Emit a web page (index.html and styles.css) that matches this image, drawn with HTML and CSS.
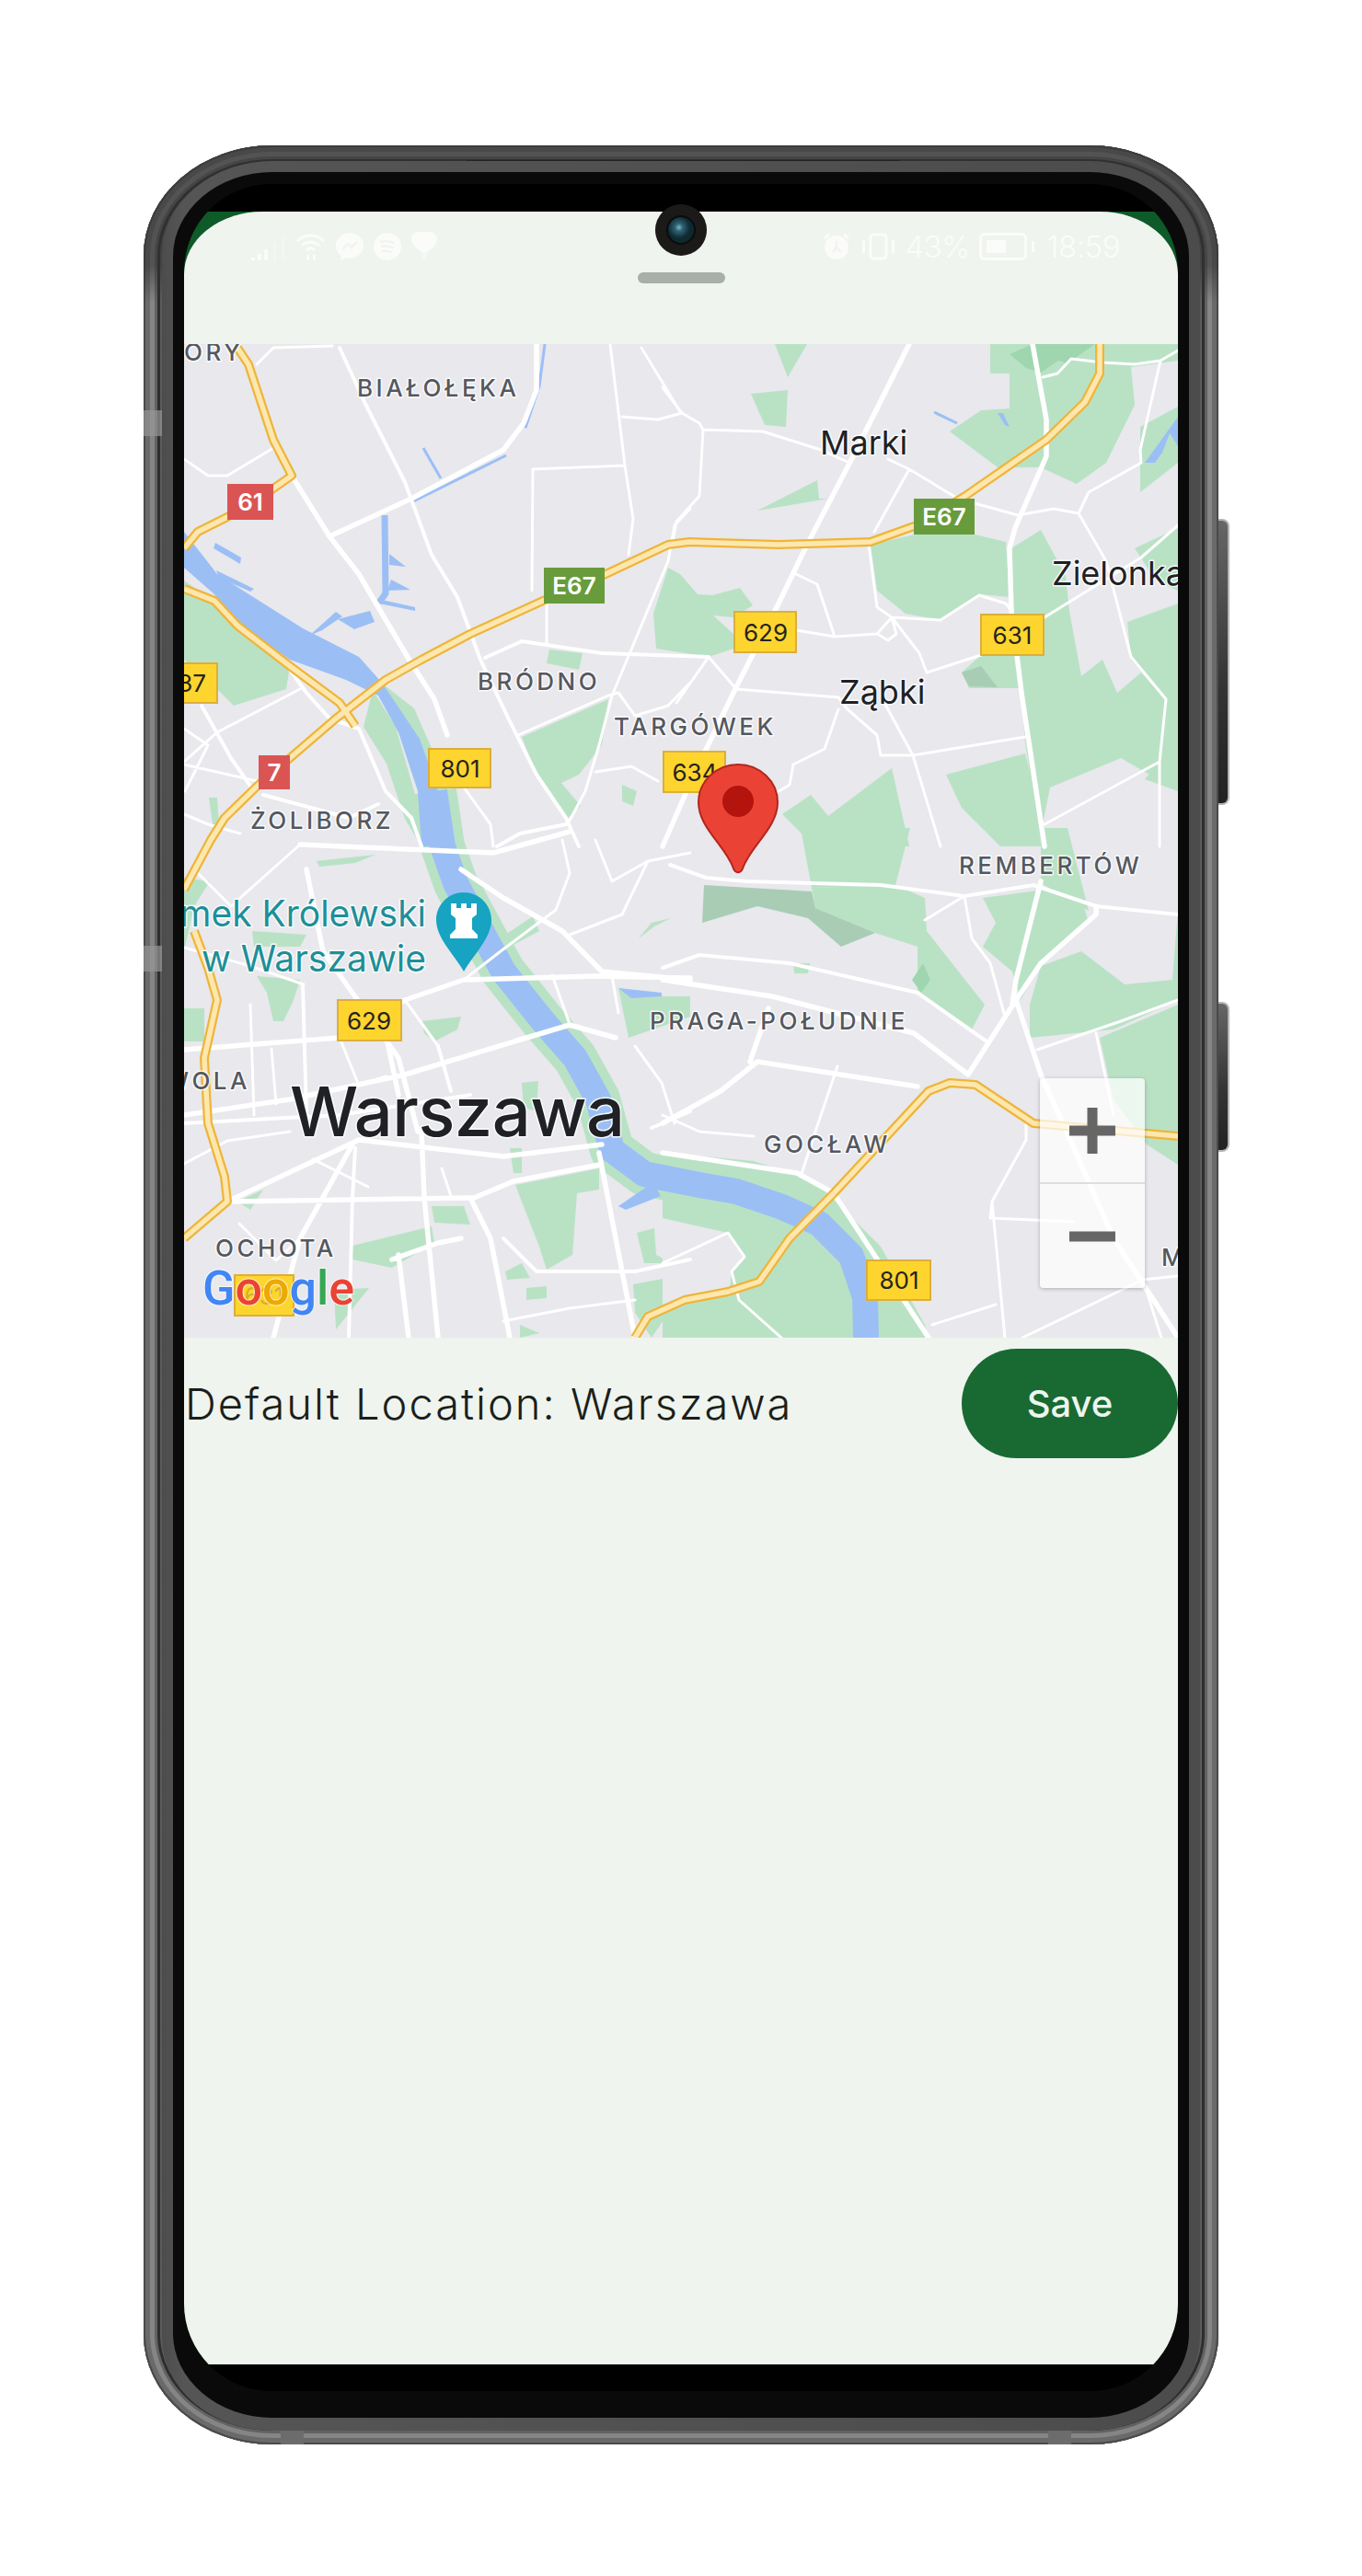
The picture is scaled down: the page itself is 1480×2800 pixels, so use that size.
FILE: index.html
```html
<!DOCTYPE html>
<html lang="en">
  <head>
    <meta charset="UTF-8" />
    <meta name="viewport" content="width=device-width, initial-scale=1.0" />
    <title>Default Location</title>
    <link rel="stylesheet" href="styles.css">
  </head>
  <body>
    <div class="phone">
      <span class="side-key side-key-top"></span>
      <span class="side-key side-key-low"></span>
      <span class="band band-left-top"></span>
      <span class="band band-left-low"></span>
      <span class="band band-bottom-left"></span>
      <span class="band band-bottom-right"></span>
      <span class="top-slit"></span>

      <div class="mid-frame">
        <div class="bezel">
          <div class="screen">
            <div class="app-back">
              <div class="app">
                <div class="camera"><span class="lens"></span></div>

                <div class="status-bar">
                  <div class="status-group status-left">
                    <svg class="icon" width="37" height="32" viewBox="0 0 37 32">
                      <rect x="0" y="28" width="4" height="3" />
                      <rect x="7" y="24" width="4" height="7" />
                      <rect x="14" y="19" width="4" height="12" />
                      <rect x="24" y="12" width="3" height="19" opacity=".4" />
                      <rect x="33" y="4" width="3" height="27" opacity=".4" />
                    </svg>
                    <svg class="icon" width="33" height="32" viewBox="0 0 33 32">
                      <path class="icon-line" d="M2 10C10 2 23 2 31 10M7 15C12 10 21 10 26 15M12 20C15 17 18 17 21 20" />
                      <rect x="12" y="25" width="3" height="6" />
                      <rect x="19" y="25" width="3" height="6" />
                    </svg>
                    <svg class="icon" width="30" height="30" viewBox="0 0 30 30">
                      <path d="M15 0C6.700 0 0 6.200 0 14c0 4.400 2.100 8.200 5.500 10.800V30l5-2.800c1.400.4 2.900.6 4.500.6 8.300 0 15-6.200 15-13.800S23.300 0 15 0z" />
                      <path class="icon-cut" d="M7 18l6-6 4 4 6-6" />
                    </svg>
                    <svg class="icon" width="30" height="30" viewBox="0 0 30 30">
                      <circle cx="15" cy="15" r="15" />
                      <path class="icon-cut" d="M7 10c6-1.500 11-1 16 1.500M8 15c5-1 9-.7 13.500 1.500M9 20c4-.8 7-.5 11 1.200" />
                    </svg>
                    <svg class="icon" width="28" height="32" viewBox="0 0 28 32">
                      <path d="M14 24C6 19 0 14 0 8 0 3 4 0 8 0h12c4 0 8 3 8 8 0 6-6 11-14 16z" />
                      <rect x="12" y="24" width="4" height="7" opacity=".5" />
                    </svg>
                  </div>
                  <div class="status-group status-right">
                    <svg class="icon icon-alarm" width="30" height="30" viewBox="0 0 30 30">
                      <circle cx="15" cy="16" r="13" />
                      <path class="icon-line" d="M2 6l5-4M28 6l-5-4" />
                      <path class="icon-cut" d="M15 9v7l-4 5M15 16l5 5" />
                    </svg>
                    <svg class="icon" width="37" height="30" viewBox="0 0 37 30">
                      <rect class="icon-line" x="10" y="2" width="17" height="26" rx="3" />
                      <rect x="1" y="8" width="3" height="14" />
                      <rect x="33" y="8" width="3" height="14" />
                    </svg>
                    <span class="status-text status-percent">43%</span>
                    <span class="battery"><span class="battery-fill"></span></span>
                    <span class="status-text status-time">18:59</span>
                  </div>
                </div>

                <div class="handle"></div>

                <div class="map">
                  <svg class="map-art" viewBox="200 374 1080 1080" width="1080" height="1080">
                    <defs>
                      <g id="highways">
                        <path d="M258 378L270 396 297 478 317 517 297 531 247 562 215 578 200 596" />
                        <path d="M200 640L233 653 258 680 315 724 369 764 386 789" />
                        <path d="M200 967L229 913 244 889 281 853 315 824 365 781 419 739 458 717 511 689 590 653 654 626 726 592 749 589 846 592 946 589 996 571 1049 539 1137 478 1179 437 1195 406 1195 374" />
                        <path d="M211 1012L226 1052 236 1087 222 1150 226 1221 244 1279 247 1306 200 1346" />
                        <path d="M690 1454L704 1431 744 1413 791 1404 825 1393 858 1346 906 1297 1009 1186 1032 1177 1060 1179 1123 1221 1280 1235" />
                      </g>
                      <path id="river" d="M472 860L481 920 495 960 522 1010 547 1056 590 1110 625 1150 650 1195 665 1250 700 1276 760 1288 800 1295 850 1312 890 1330 925 1365 940 1410 941 1454" />
                    </defs>

                    <rect class="land" x="200" y="374" width="1080" height="1080" />

                    <g class="park">
                      <polygon points="200,631 226,649 254,681 315,724 311,749 254,767 236,749 200,717" />
                      <polygon points="567,801 661,760 654,810 629,842 610,851 631,876 617,889 583,842" />
                      <polygon points="597,706 633,710 629,728 594,721" />
                      <polygon points="676,853 692,860 688,876 676,871" />
                      <polygon points="726,617 739,624 758,646 774,647 804,639 818,658 797,671 775,669 797,689 797,705 770,714 713,705 710,667" />
                      <polygon points="842,374 877,374 856,410" />
                      <polygon points="816,428 856,424 854,464 831,462" />
                      <polygon points="823,555 888,522 890,542 900,542" />
                      <polygon points="1076,374 1280,374 1280,392 1229,399 1233,440 1202,503 1170,526 1135,510 1133,508 1084,508 1032,469 1066,446 1097,444 1097,406 1076,406" />
                      <polygon points="1239,464 1280,442 1280,503 1239,535" />
                      <polygon points="946,592 994,581 1059,581 1093,589 1097,649 1064,646 1022,674 984,667 953,642" />
                      <polygon points="1099,596 1131,576 1158,626 1162,664 1175,735 1198,717 1214,753 1240,731 1267,760 1260,824 1280,860 1218,824 1141,856 1133,896 1149,920 1130,920 1114,806 1099,646" />
                      <polygon points="1225,676 1280,656 1280,860 1244,847 1260,828 1267,760 1229,717" />
                      <polygon points="1233,596 1280,574 1280,642 1256,631" />
                      <polygon points="1045,731 1066,712 1106,712 1110,748 1053,748" />
                      <polygon points="850,885 881,864 900,887 969,835 988,920 885,920" />
                      <polygon points="1028,842 1114,819 1133,896 1141,920 1087,920 1045,878" />
                      <polygon points="870,900 989,900 973,962 882,965" />
                      <polygon points="882,965 973,962 1005,976 1007,1012 1070,1092 1056,1119 997,1079 997,1029 951,1014 886,987" />
                      <polygon points="862,1047 880,1047 878,1058 863,1058" />
                      <polygon points="1068,1029 1082,1003 1068,976 1171,962 1183,1003 1131,1047 1109,1087 1100,1056" />
                      <polygon points="1131,1050 1175,1034 1222,1070 1274,1065 1280,989 1280,1087 1210,1119 1119,1128 1119,1092" />
                      <polygon points="1195,1128 1280,1092 1280,1266 1246,1244 1210,1195" />
                      <polygon points="1131,900 1160,900 1183,990 1131,960" />
                      <polygon points="720,1253 819,1262 886,1284 957,1355 1005,1440 1009,1454 720,1454" />
                      <polygon points="200,954 228,958 211,985 200,1034" />
                      <polygon points="200,1096 222,1096 222,1132 200,1132" />
                      <polygon points="274,1012 333,1016 326,1029 276,1029" />
                      <polygon points="279,1061 326,1065 319,1087 308,1110 297,1110 290,1079" />
                      <polygon points="344,936 408,929 386,938 347,942" />
                      <polygon points="227,867 236,867 238,896 231,896" />
                      <polygon points="694,1020 708,1003 729,998 711,1007" />
                      <polygon points="672,1074 722,1083 750,1083 750,1105 683,1128" />
                      <polygon points="549,1016 579,996 586,1012 554,1029" />
                      <polygon points="458,1110 501,1105 497,1119 472,1132 461,1123" />
                      <polygon points="560,1288 651,1270 651,1293 627,1297 622,1364 594,1380 586,1355" />
                      <polygon points="549,1382 567,1373 576,1389 551,1391" />
                      <polygon points="572,1400 594,1398 594,1411 572,1413" />
                      <polygon points="692,1340 711,1335 713,1364 730,1373 700,1373" />
                      <polygon points="688,1396 736,1387 736,1413 708,1454 690,1427" />
                      <polygon points="379,1355 469,1333 472,1351 426,1378 383,1369" />
                      <polygon points="469,1311 504,1311 511,1331 472,1329" />
                      <polygon points="258,1306 286,1293 272,1315" />
                      <polygon points="363,1402 401,1400 365,1445" />
                      <polygon points="565,1440 586,1449 565,1454" />
                      <polygon points="554,1248 567,1248 567,1275 558,1275" />
                      <polygon points="567,1177 585,1175 583,1208 569,1204" />
                      <polygon points="405,735 450,770 485,850 500,920 498,960 470,900 450,830 420,770" />
                      <polygon points="405,750 430,790 450,860 458,920 440,890 420,830 395,790" />
                    </g>
                    <g class="park-dark">
                      <polygon points="1097,385 1122,374 1190,374 1160,395 1150,392 1131,405 1115,400" />
                      <polygon points="991,1065 1003,1047 1011,1065 1001,1079" />
                    </g>
                    <g class="park-grey">
                      <polygon points="765,962 882,969 886,987 951,1014 914,1029 878,998 823,985 763,1003" />
                      <polygon points="1045,731 1066,724 1084,747 1053,746" />
                    </g>
                    <g class="land">
                      <polygon points="720,1324 791,1340 809,1366 795,1382 793,1400 720,1418" />
                    </g>

                    <use href="#river" class="river-bank" />
                    <use href="#river" class="river-water" />
                    <g class="water">
                      <polygon points="200,578 236,624 329,683 390,714 415,742 456,803 476,860 486,920 458,920 454,860 433,796 411,756 376,739 315,717 258,678 233,646 200,617" />
                      <polygon points="672,1311 710,1285 718,1300 680,1315" />
                      <polygon points="672,1074 719,1079 719,1083 686,1085" />
                      <polygon points="1084,449 1090,449 1097,464 1092,462" />
                      <polygon points="1244,503 1280,453 1280,485 1271,471 1263,492 1255,503" />
                      <polygon points="234,590 262,606 261,613 232,596" />
                      <polygon points="235,620 276,640 272,643 238,628" />
                      <polygon points="423,602 441,616 423,614" />
                      <polygon points="425,630 446,641 421,642" />
                      <polygon points="415,652 451,660 451,664 412,656" />
                      <polygon points="367,673 402,664 407,676 385,684" />
                      <polygon points="336,691 365,665 372,670 350,685" />
                    </g>
                    <path class="canal canal-wide" d="M418 560L419 645 412 655" />
                    <path class="canal canal-thin" d="M447 546L550 495M460 487L479 520M592 374L586 420 571 465M1015 448L1040 460" />

                    <path class="road road-sm" d="M579 510L679 506 688 564 683 603M579 510L578 642M663 374L679 506M594 656L594 699M563 799L661 756 672 753 690 778 726 767 750 742M750 553L733 571 726 610 686 706 665 756 651 810 636 860 619 892M676 453L715 456 741 449M697 378L740 449M279 396L297 378 361 376M200 499L226 517 247 517 297 487M326 749L236 796 200 828M200 792L226 810 201 860M200 831L279 849M200 885L226 896 261 906M504 856L533 896 536 920M647 839L686 833 715 849M720 421L741 449 760 460 764 467 829 469 892 489 923 503M764 467L760 539 735 567 731 589M965 499L988 510 1041 542 1106 560 1145 553 1172 558 1183 535 1240 503M988 510L950 578M1133 410L1149 406 1164 390 1198 394 1233 396 1261 392 1280 381M1261 392L1239 489 1240 503M1172 558L1202 610 1229 714 1267 760 1260 828 1260 920M1135 671L1240 606 1280 571M1135 896L1260 828M944 592L953 660 969 671 1022 674 1064 647 1093 656 1099 664M969 671L953 689 965 696 974 689 969 671M865 685L907 692 953 689M969 671L999 710 1007 731 1066 712M865 624L888 635 907 692M770 714L800 749 911 758 921 771 953 799 957 821 992 821 1114 801M770 714L735 764M961 764L992 821 1022 920M911 771L896 814 862 831 858 853 835 867M1048 974L1056 1020 1076 1047 1092 1105M1127 1141L1218 1110 1280 1087M1191 1123L1210 1212M910 1159L886 1230 870 1279M720 1212L760 1230 819 1235M1115 1221L1115 1239 1078 1306 1076 1324 1167 1328M1078 1306L1092 1454M1013 1440L1082 1418M1111 1454L1242 1391 1280 1387M1242 1391L1262 1454M720 1373L791 1340 809 1366 795 1382 803 1413 849 1454M211 945L251 985 326 918M611 913L619 949 604 989 544 1034 504 1065M647 913L665 958 704 936 750 927M704 936L676 994 619 1016M272 1092L276 1212M547 1436L619 1422 690 1413M665 1061L672 1101M690 1137L719 1177 733 1221M200 1030L272 1050 330 1070M440 1087L476 1137M369 1128L390 1180 419 1170M560 1130L619 1114M600 1060L620 1116M480 1270L490 1300M295 1140L300 1200M200 1265L247 1240 315 1230M260 1330L300 1370 326 1346M340 1260L400 1290M1005 1000L1048 974" />
                    <path class="road road-md" d="M369 378L397 439 440 524 469 603 497 649 522 717 551 778 583 842 615 889 629 920M527 715L567 697 654 710 770 714M315 728L333 753 358 781 390 792 419 860 447 889 458 920M219 767L251 824 276 860M286 864L379 889 411 874M615 896L565 906 540 920M728 940L767 954 811 958 957 962 1048 974 1123 962 1191 985 1280 994M720 1052L760 1038 858 1047 997 1079 1072 1132M200 1221L369 1212 511 1190M547 1346L583 1382 690 1382 750 1369M386 1248L383 1302 379 1454M329 1070L333 1212M476 1137L490 1186M708 1226L750 1208" />
                    <path class="road road-lg" d="M320 522L358 583 390 624 411 660 447 721 472 760 486 799M358 583L447 542 547 489 569 460 583 424 583 374M988 374L927 496 877 592 846 656 797 753 754 842 720 920M1122 374L1137 456 1137 496 1103 574 1097 596 1099 664 1110 753 1135 920M1131 958L1104 1065 1100 1092M1191 985L1191 994 1131 1047 1104 1087 1052 1168M1104 1087L1131 1168 1167 1248 1210 1346 1280 1454M720 1065L839 1083 993 1123 1052 1168M720 1221L783 1186 823 1154 997 1181M815 1154L835 1096M720 1253L866 1275 906 1297 1009 1454M200 1212L315 1195 440 1168 619 1114 669 1128M247 1306L390 1239 547 1257 654 1244M383 1244L326 1346 297 1454M458 1230L461 1302 476 1454M511 1302L533 1346 554 1454M333 945L351 1034 433 1150 454 1230M326 918L536 927 619 904M501 945L547 976 611 1012 654 1056 750 1065M419 1123L433 1190M651 1253L690 1454M247 1306L515 1302 558 1284 651 1266M426 1369L476 1351 501 1346M433 1364L444 1454M200 1141L369 1128 440 1087 504 1065 647 1061 750 1063" />

                    <use href="#highways" class="hw-case" />
                    <use href="#highways" class="hw-core" />

                    <text class="label-area" x="200" y="392">ORY</text>
                    <text class="label-area" x="388" y="431">BIAŁOŁĘKA</text>
                    <text class="label-area" x="519" y="750">BRÓDNO</text>
                    <text class="label-area" x="667" y="799">TARGÓWEK</text>
                    <text class="label-area" x="272" y="901">ŻOLIBORZ</text>
                    <text class="label-area" x="1042" y="950">REMBERTÓW</text>
                    <text class="label-area" x="706" y="1119">PRAGA-POŁUDNIE</text>
                    <text class="label-area" x="830" y="1253">GOCŁAW</text>
                    <text class="label-area" x="272" y="1184" text-anchor="end">WOLA</text>
                    <text class="label-area" x="234" y="1366">OCHOTA</text>
                    <text class="label-area" x="1262" y="1376">M</text>
                    <text class="label-town" x="891" y="494">Marki</text>
                    <text class="label-town" x="912" y="765">Ząbki</text>
                    <text class="label-town" x="1143" y="636">Zielonka</text>
                    <text class="label-city" x="315" y="1235">Warszawa</text>
                    <text class="label-poi" x="463" y="1007" text-anchor="end">Zamek Królewski</text>
                    <text class="label-poi" x="463" y="1056" text-anchor="end">w Warszawie</text>

                    <path class="poi-pin" d="M504 970c-16.600 0-30 13.400-30 30 0 20 20 38 30 56 10-18 30-36 30-56 0-16.600-13.400-30-30-30z" />
                    <path class="poi-tower" d="M490 982h6v5h5v-5h6v5h5v-5h6v12l-5 4v12l6 6v4h-30v-4l6-6v-12l-5-4z" />

                    <g class="shield shield-red">
                      <rect x="247" y="526" width="50" height="39" /><text x="272" y="555">61</text>
                      <rect x="281" y="821" width="34" height="37" /><text x="298" y="849">7</text>
                    </g>
                    <g class="shield shield-green">
                      <rect x="591" y="617" width="66" height="39" /><text x="624" y="646">E67</text>
                      <rect x="993" y="542" width="66" height="39" /><text x="1026" y="571">E67</text>
                    </g>
                    <g class="shield shield-yellow">
                      <rect x="180" y="721" width="56" height="43" /><text x="224" y="752" class="shield-end">637</text>
                      <rect x="466" y="814" width="67" height="42" /><text x="500" y="845">801</text>
                      <rect x="798" y="665" width="67" height="44" /><text x="832" y="697">629</text>
                      <rect x="1066" y="668" width="68" height="44" /><text x="1100" y="700">631</text>
                      <rect x="721" y="817" width="67" height="44" /><text x="755" y="849">634</text>
                      <rect x="367" y="1087" width="69" height="44" /><text x="401" y="1119">629</text>
                      <rect x="942" y="1370" width="69" height="43" /><text x="977" y="1401">801</text>
                      <rect x="255" y="1386" width="64" height="44" /><text x="287" y="1418" class="shield-faint">631</text>
                    </g>

                    <text class="google" x="220" y="1418"><tspan class="g-blue">G</tspan><tspan class="g-red">o</tspan><tspan class="g-yellow">o</tspan><tspan class="g-blue">g</tspan><tspan class="g-green">l</tspan><tspan class="g-red">e</tspan></text>

                    <path class="pin-body" d="M802 831c-23.700 0-43 18.500-43 41 0 28 30 48 38 72 1.700 5.500 8.300 5.500 10 0 8-24 38-44 38-72 0-22.500-19.300-41-43-41z" />
                    <circle class="pin-dot" cx="802" cy="871" r="17" />
                  </svg>

                  <div class="zoom-box">
                    <button class="zoom-btn" aria-label="Zoom in"><span class="zoom-h"></span><span class="zoom-v"></span></button>
                    <button class="zoom-btn" aria-label="Zoom out"><span class="zoom-h"></span></button>
                  </div>
                </div>

                <div class="location-row">
                  <span class="location-text">Default Location: Warszawa</span>
                  <button class="save-btn">Save</button>
                </div>
              </div>
            </div>
          </div>
        </div>
      </div>
    </div>
  </body>
</html>
```

FILE: styles.css
```css
* {
  box-sizing: border-box;
  margin: 0;
  padding: 0;
}
body {
  width: 1480px;
  height: 2800px;
  padding: 158px 156px 0;
  background-color: #fff;
  font-family: "Inter", "Liberation Sans", sans-serif;
  overflow: hidden;
}

/* phone shell */
.phone {
  position: relative;
  width: 1168px;
  height: 2499px;
  padding: 17px 20px 15px;
  border-radius: 140px / 120px;
  background-color: #5c5c5c;
  box-shadow:
    inset 0 0 0 2px #4a4a4a,
    inset 0 0 0 7px #6a6a6a,
    inset 0 0 0 12px #858585,
    inset 0 0 0 15px #626262,
    inset 0 0 0 18px #2e2e2e;
}
.phone::before {
  content: "";
  position: absolute;
  inset: 0;
  border-radius: inherit;
  background: linear-gradient(180deg, rgba(50, 50, 50, 0.6) 0, rgba(50, 50, 50, 0.6) 130px, rgba(50, 50, 50, 0) 170px);
}
.side-key {
  position: absolute;
  left: 100%;
  width: 12px;
  border: 2px solid #b4b4b4;
  border-left: 0;
  border-radius: 0 8px 8px 0;
  background: linear-gradient(180deg, #666, #333 60%, #222);
}
.side-key-top {
  top: 406px;
  height: 311px;
}
.side-key-low {
  top: 931px;
  height: 163px;
}
.band {
  position: absolute;
  background-color: rgba(150, 150, 150, 0.7);
}
.band-left-top,
.band-left-low {
  left: 0;
  width: 20px;
  height: 28px;
}
.band-left-top {
  top: 288px;
}
.band-left-low {
  top: 870px;
}
.band-bottom-left,
.band-bottom-right {
  bottom: 0;
  width: 25px;
  height: 15px;
  background-color: #6c6c6c;
}
.band-bottom-left {
  left: 149px;
}
.band-bottom-right {
  left: 983px;
}
.top-slit {
  position: absolute;
  top: 16px;
  left: 351px;
  width: 471px;
  height: 2px;
  background-color: #222;
}
.mid-frame {
  position: relative;
  height: 100%;
  padding: 12px 12px 14px;
  border-radius: 120px / 102px;
  background: linear-gradient(90deg, #4c4c4c, #555 2%, #4c4c4c 98%);
}
.bezel {
  height: 100%;
  padding: 13px 12px 29px;
  border-radius: 108px / 92px;
  background-color: #0a0a0a;
}
.screen {
  height: 100%;
  padding: 30px 0 29px;
  border-radius: 95px;
  background-color: #000;
  overflow: hidden;
}
.app-back {
  height: 100%;
  background-color: #0e5a28;
}
.app {
  position: relative;
  display: flex;
  flex-direction: column;
  height: 100%;
  border-radius: 85px 85px 0 0 / 68px 68px 0 0;
  background-color: #eff4ee;
}

/* status bar */
.camera {
  position: absolute;
  top: -8px;
  left: 512px;
  width: 56px;
  height: 56px;
  padding: 12px;
  border-radius: 50%;
  background-color: #1b1a19;
}
.lens {
  display: block;
  width: 32px;
  height: 32px;
  border: 2px solid #0a0c0e;
  border-radius: 50%;
  background: radial-gradient(circle at 42% 40%, #7fb6c8 0, #2f6373 18%, #0f2a33 50%, #10251f 100%);
}
.status-bar {
  display: flex;
  justify-content: space-between;
  align-items: center;
  height: 66px;
  padding: 9px 63px 0 73px;
}
.status-group {
  display: flex;
  align-items: center;
}
.status-left {
  gap: 11px;
}
.status-right {
  gap: 10px;
}
.icon {
  display: block;
  fill: #fbfcfa;
}
.icon-alarm {
  margin-right: 2px;
}
.icon-line {
  fill: none;
  stroke: #fbfcfa;
  stroke-width: 3;
}
.icon-cut {
  fill: none;
  stroke: #eff4ee;
  stroke-width: 2.500;
}
.status-text {
  font-size: 33px;
  line-height: 30px;
  font-weight: 300;
  letter-spacing: -0.500px;
  color: #fbfcfa;
}
.status-time {
  margin-left: 12px;
}
.battery {
  position: relative;
  width: 52px;
  height: 30px;
  padding: 5px;
  border: 3px solid #fbfcfa;
  border-radius: 6px;
}
.battery::after {
  content: "";
  position: absolute;
  top: 6px;
  left: 54px;
  width: 3px;
  height: 12px;
  background-color: #fbfcfa;
}
.battery-fill {
  display: block;
  width: 21px;
  height: 100%;
  background-color: #fbfcfa;
}
.handle {
  width: 95px;
  height: 12px;
  margin: 0 auto;
  border-radius: 6px;
  background-color: #a8aea8;
}

/* map */
.map {
  position: relative;
  width: 1080px;
  height: 1080px;
  margin-top: 66px;
  overflow: hidden;
}
.map-art {
  display: block;
}
.land {
  fill: #e8e8ed;
}
.park {
  fill: #b9e2c5;
}
.park-dark {
  fill: #9fd6b0;
}
.park-grey {
  fill: #a8cdb4;
}
.water {
  fill: #9bbff5;
}
.canal {
  fill: none;
  stroke: #9bbff5;
}
.canal-wide {
  stroke-width: 7px;
}
.canal-thin {
  stroke-width: 3px;
}
.river-bank {
  fill: none;
  stroke: #b9e2c5;
  stroke-width: 48;
  stroke-linejoin: round;
}
.river-water {
  fill: none;
  stroke: #9bbff5;
  stroke-width: 28;
  stroke-linejoin: round;
}
.road {
  fill: none;
  stroke: #fff;
  stroke-linecap: round;
  stroke-linejoin: round;
}
.road-sm {
  stroke-width: 3px;
}
.road-md {
  stroke-width: 4px;
}
.road-lg {
  stroke-width: 5.500px;
}
.hw-case {
  fill: none;
  stroke: #eeb53a;
  stroke-width: 10px;
  stroke-linejoin: round;
}
.hw-core {
  fill: none;
  stroke: #fde7ae;
  stroke-width: 5.500px;
  stroke-linejoin: round;
}
.label-area,
.label-town,
.label-city,
.label-poi {
  paint-order: stroke;
  stroke: rgba(255, 255, 255, 0.85);
  stroke-width: 3px;
  stroke-linejoin: round;
}
.label-area {
  font-size: 26px;
  font-weight: 500;
  letter-spacing: 3.500px;
  fill: #55585f;
}
.label-town {
  font-size: 36px;
  fill: #202124;
}
.label-city {
  font-size: 74px;
  font-weight: 500;
  letter-spacing: -0.500px;
  fill: #202124;
}
.label-poi {
  font-size: 39px;
  fill: #1d8f99;
}
.poi-pin {
  fill: #17a3c2;
}
.poi-tower {
  fill: #fff;
}
.shield text {
  font-size: 26px;
  font-weight: 400;
  text-anchor: middle;
}
.shield text.shield-end {
  text-anchor: end;
}
.shield-red rect {
  fill: #db5454;
}
.shield-red text,
.shield-green text {
  fill: #fff;
  font-weight: 600;
}
.shield-green rect {
  fill: #689b3b;
}
.shield-yellow rect {
  fill: #fed52e;
  stroke: #dcae3c;
  stroke-width: 2px;
}
.shield-yellow text {
  fill: #262320;
}
.shield-yellow text.shield-faint {
  fill: #d2b02c;
}
.google {
  font-family: "Roboto", "Liberation Sans", sans-serif;
  font-size: 52px;
  font-weight: 500;
  paint-order: stroke;
  stroke: rgba(255, 255, 255, 0.7);
  stroke-width: 2px;
}
.g-blue {
  fill: #4285f4;
}
.g-red {
  fill: #ea4335;
}
.g-yellow {
  fill: #eea800;
}
.g-green {
  fill: #34a853;
}
.pin-body {
  fill: #ea4335;
  stroke: #b3261e;
  stroke-width: 2px;
}
.pin-dot {
  fill: #b3140e;
}
.zoom-box {
  position: absolute;
  top: 798px;
  left: 930px;
  display: flex;
  flex-direction: column;
  width: 114px;
  height: 228px;
  border-radius: 4px;
  background-color: rgba(255, 255, 255, 0.72);
  box-shadow: 0 1px 4px rgba(0, 0, 0, 0.25);
}
.zoom-btn {
  position: relative;
  flex: 1;
  border: 0;
  background: none;
}
.zoom-btn + .zoom-btn {
  border-top: 2px solid #dedede;
}
.zoom-h,
.zoom-v {
  position: absolute;
  top: 50%;
  left: 50%;
  background-color: #666;
  transform: translate(-50%, -50%);
}
.zoom-h {
  width: 50px;
  height: 11px;
}
.zoom-v {
  width: 11px;
  height: 50px;
}

/* bottom row */
.location-row {
  display: flex;
  justify-content: space-between;
  align-items: center;
  margin-top: 12px;
  padding-left: 1px;
}
.location-text {
  font-size: 47px;
  font-weight: 300;
  letter-spacing: 2px;
  color: #1b1f1b;
}
.save-btn {
  width: 235px;
  height: 119px;
  border: 0;
  border-radius: 60px;
  background-color: #186a32;
  color: #eef4ee;
  font-family: "Inter", "Liberation Sans", sans-serif;
  font-size: 40px;
  font-weight: 500;
}
```
